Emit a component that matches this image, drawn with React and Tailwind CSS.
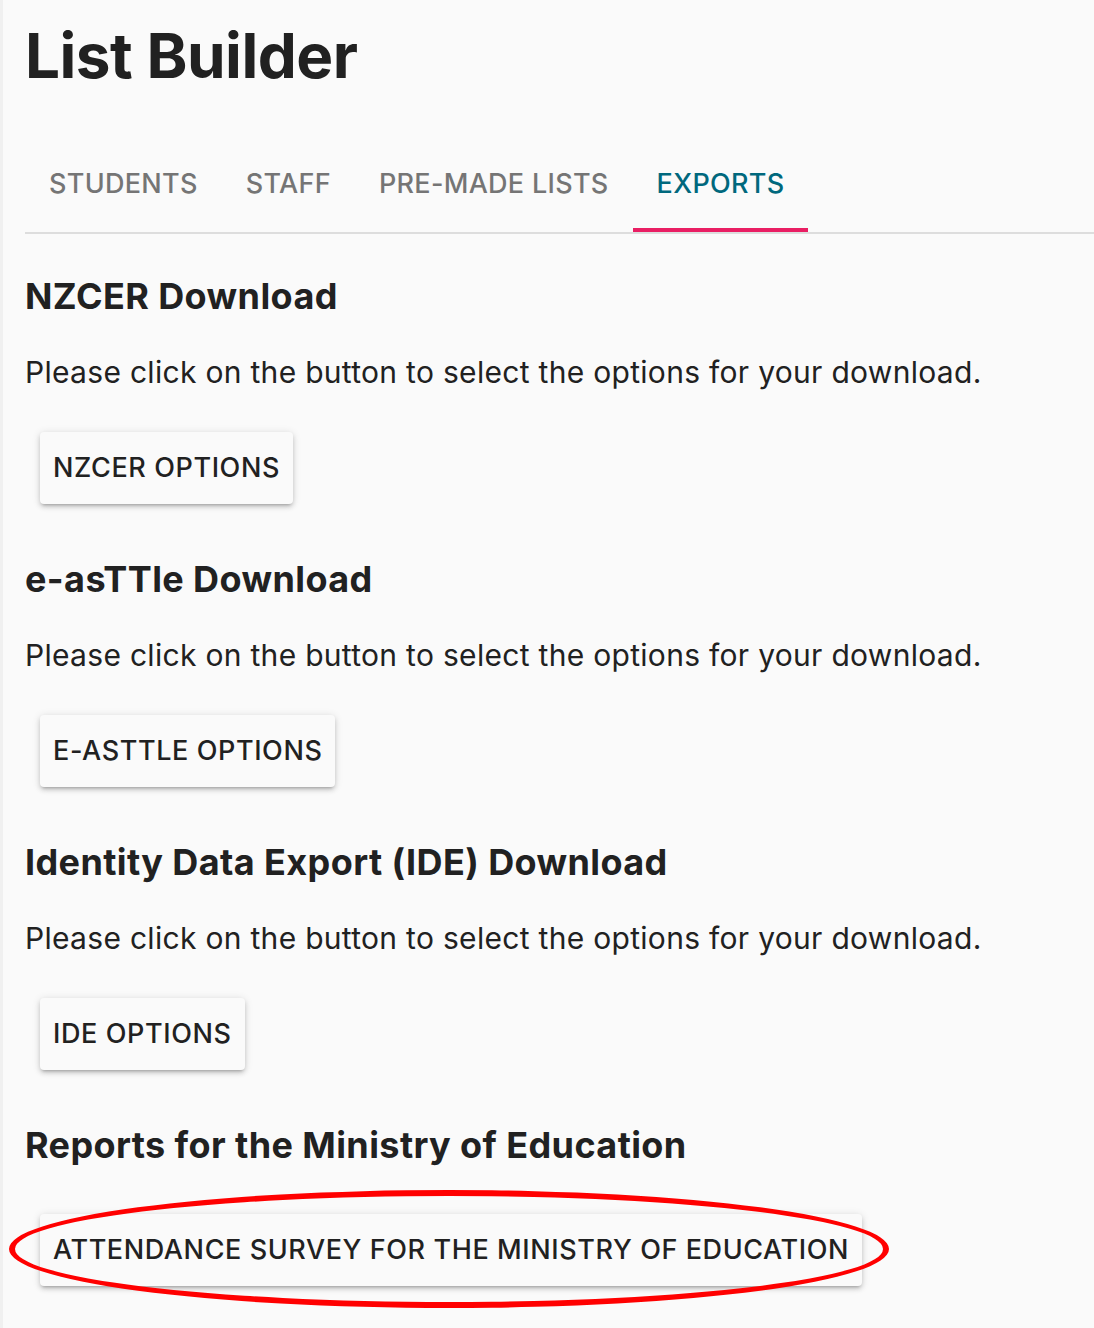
import React from "react";

const font = { fontFamily: "Inter, 'Noto Sans', sans-serif" };

function Btn({ children }) {
  return (
    <button className="h-[72px] px-[13px] rounded-[4px] bg-[#fafafa] text-[#212121] text-[27px] font-medium tracking-[0.6px] uppercase shadow-[0_3px_3px_-2px_rgba(0,0,0,0.2),0_3px_5px_0_rgba(0,0,0,0.14),0_1px_9px_0_rgba(0,0,0,0.12)]">
      {children}
    </button>
  );
}

function Section({ title, children, noText, first }) {
  return (
    <div className="flex flex-col items-start">
      <h2 className={"text-[36px] font-bold text-[#212121] leading-[44px] tracking-[0.4px] " + (first ? "mt-[40px]" : "mt-[53px]")}>
        {title}
      </h2>
      {!noText && (
        <p className="text-[30px] text-[#212121] leading-[44px] tracking-[0.3px] mt-[32px]">
          Please click on the button to select the options for your download.
        </p>
      )}
      <div className={noText ? "mt-[47px] ml-[15px]" : "mt-[38px] ml-[15px]"}>{children}</div>
    </div>
  );
}

export default function App() {
  const tabs = ["Students", "Staff", "Pre-made Lists", "Exports"];
  return (
    <div style={font} className="min-h-[1328px] w-[1094px] bg-[#fafafa] border-l-[3px] border-[#f0f0f0] overflow-hidden">
      <div className="pl-[22px]">
        <h1 className="text-[62px] font-bold text-[#212121] leading-[64px] pt-[24px] tracking-[-0.5px]">List Builder</h1>
        <div className="mt-[48px] flex border-b-2 border-[#dddddd]">
          {tabs.map((t, i) => (
            <div
              key={t}
              className={
                "relative h-[96px] px-[24px] flex items-center text-[27px] font-medium uppercase tracking-[0.3px] " +
                (i === 3 ? "text-[#00687d]" : "text-[#757575]")
              }
            >
              {t}
              {i === 3 && <div className="absolute left-0 right-0 bottom-0 h-[4px] bg-[#e91e63]" />}
            </div>
          ))}
        </div>
        <Section title="NZCER Download" first>
          <Btn>NZCER Options</Btn>
        </Section>
        <Section title="e-asTTle Download">
          <Btn>E-asTTle Options</Btn>
        </Section>
        <Section title="Identity Data Export (IDE) Download">
          <Btn>IDE Options</Btn>
        </Section>
        <Section title="Reports for the Ministry of Education" noText>
          <div className="relative">
            <Btn>Attendance Survey for the Ministry of Education</Btn>
            <div className="absolute left-[-31px] top-[-24px] w-[880px] h-[118px] rounded-[50%] border-[6px] border-[#ff0000] pointer-events-none" />
          </div>
        </Section>
      </div>
    </div>
  );
}
